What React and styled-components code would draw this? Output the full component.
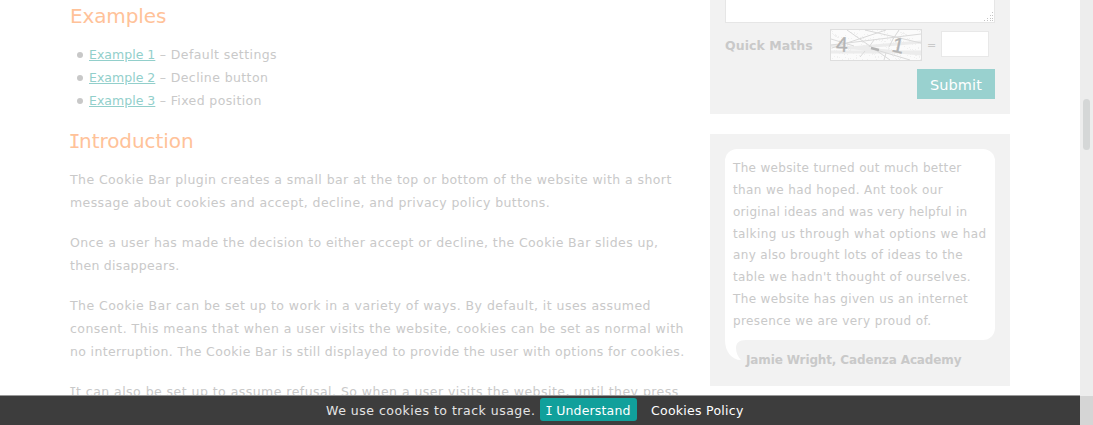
import React from "react";
import styled, { createGlobalStyle } from "styled-components";

const GlobalStyle = createGlobalStyle`
  * { box-sizing: border-box; }
  html, body { margin: 0; height: 425px; overflow: hidden; background: #fff; }
  body { font: 12.5px/23.4px Verdana, "DejaVu Sans", sans-serif; color: #c9c9c9; }
`;

const Viewport = styled.div`
  position: relative;
  display: flex;
  width: 1093px;
  height: 425px;
  overflow: hidden;
`;

const Page = styled.main`
  display: flex;
  align-items: flex-start;
  width: 1080px;
  height: 425px;
  padding-left: 70px;
  overflow: hidden;
`;

const Article = styled.article`
  width: 640px;
  flex: none;
`;

const Heading = styled.h2`
  margin: 0;
  height: 27px;
  padding-top: ${(p) => p.$top || 0}px;
  box-sizing: content-box;
  font-size: 20px;
  line-height: 27px;
  font-weight: 400;
  letter-spacing: ${(p) => p.$spacing ?? 0}px;
  color: #ffc299;
`;

const List = styled.ul`
  margin: 0;
  padding: 13px 0 0 19px;
  list-style: none;
`;

const Item = styled.li`
  display: flex;
  align-items: center;
  height: 23px;
  letter-spacing: ${(p) => p.$spacing ?? 0.5}px;
  white-space: pre;

  &::before {
    content: "";
    width: 6px;
    height: 6px;
    margin: 0 6px 0 -12px;
    border-radius: 50%;
    background: #c8c8c8;
  }
`;

const Link = styled.a`
  color: #92cfcb;
  letter-spacing: 0.02px;
  text-decoration: underline;
`;

const Body = styled.div`
  padding-top: 13px;
`;

const Paragraph = styled.p`
  margin: 0 0 16px;
`;

const Line = styled.span`
  display: block;
  white-space: nowrap;
  letter-spacing: ${(p) => p.$spacing ?? 0.5}px;
`;

const SlabI = styled.span`
  font-family: "DejaVu Sans Mono", monospace;
  margin: 0 ${(p) => p.$tuck ?? -1}px;
`;

const Sidebar = styled.aside`
  width: 300px;
  flex: none;
  display: flex;
  flex-direction: column;
  gap: 20px;
`;

const FormPanel = styled.section`
  height: 114px;
  padding: 0 15px;
  background: #f2f2f2;
`;

const MessageBox = styled.div`
  display: flex;
  justify-content: flex-end;
  align-items: flex-end;
  height: 23px;
  border: 1px solid #e6e6e6;
  border-top: 0;
  background: #fff;
`;

const MathsRow = styled.div`
  display: flex;
  align-items: center;
  height: 44px;
`;

const MathsLabel = styled.label`
  width: 105px;
  padding-top: 1px;
  font-weight: 700;
  font-size: 12.5px;
  letter-spacing: 0.05px;
  white-space: nowrap;
`;

const Equals = styled.span`
  width: 19px;
  padding: 1px 0 0 5px;
  font-size: 11px;
`;

const Answer = styled.div`
  width: 48px;
  height: 26px;
  margin-bottom: 2px;
  border: 1px solid #e8e8e8;
  background: #fff;
`;

const Submit = styled.button`
  display: block;
  width: 78px;
  height: 30px;
  margin: 2px 0 0 auto;
  padding: 2px 0 0;
  border: 0;
  background: #99d1cf;
  color: #fff;
  font: 14.5px/28px Verdana, "DejaVu Sans", sans-serif;
  letter-spacing: 0.1px;
`;

const QuotePanel = styled.section`
  height: 252px;
  padding: 15px 15px 0;
  background: #f2f2f2;
`;

const Quote = styled.blockquote`
  margin: 0;
  height: 191px;
  padding: 8.8px 8px 0;
  border-radius: 12px 12px 12px 0;
  background: #fff;
  font-size: 12px;
  line-height: 21.9px;
`;

const Credit = styled.div`
  display: flex;
  height: 30px;
`;

const Author = styled.strong`
  padding-top: 8px;
  font-size: 12px;
  line-height: 24px;
  letter-spacing: -0.13px;
  white-space: nowrap;
`;

const Scrollbar = styled.div`
  width: 13px;
  height: 425px;
  padding: 99px 3px 0;
  background: linear-gradient(#ededed 396px, #d5d5d5 396px);
`;

const Thumb = styled.div`
  width: 7px;
  height: 51px;
  border-radius: 4px;
  background: #d5d7d7;
`;

const CookieBar = styled.div`
  position: absolute;
  left: 0;
  bottom: 0;
  display: flex;
  align-items: center;
  width: 1080px;
  height: 30px;
  padding-left: 326px;
  border-top: 1px solid #999;
  background: #3d3d3d;
  color: #e4e4e4;
  white-space: nowrap;
`;

const CookieText = styled.span`
  width: 214px;
  letter-spacing: 0.5px;
`;

const Accept = styled.button`
  width: 97px;
  height: 23px;
  margin: 0 14px 2px 0;
  padding: 2px 0 0;
  border: 0;
  border-radius: 3px;
  background: #11a09b;
  color: #fff;
  font: 12.5px/21px Verdana, "DejaVu Sans", sans-serif;
  letter-spacing: 0.17px;
`;

const Policy = styled.a`
  color: #fff;
  letter-spacing: 0.27px;
`;

const examples = [
  ["Example 1", " – Default settings", 0.42],
  ["Example 2", " – Decline button", 0.4],
  ["Example 3", " – Fixed position", 0.38],
];

const paragraphs = [
  [
    ["The Cookie Bar plugin creates a small bar at the top or bottom of the website with a short", 0.42],
    ["message about cookies and accept, decline, and privacy policy buttons.", 0.41],
  ],
  [
    ["Once a user has made the decision to either accept or decline, the Cookie Bar slides up,", 0.4],
    ["then disappears.", 0.29],
  ],
  [
    ["The Cookie Bar can be set up to work in a variety of ways. By default, it uses assumed", 0.45],
    ["consent. This means that when a user visits the website, cookies can be set as normal with", 0.46],
    ["no interruption. The Cookie Bar is still displayed to provide the user with options for cookies.", 0.36],
  ],
];

const quote = [
  ["The website turned out much better", 0.33],
  ["than we had hoped. Ant took our", 0.39],
  ["original ideas and was very helpful in", 0.27],
  ["talking us through what options we had", 0.4],
  ["any also brought lots of ideas to the", 0.35],
  ["table we hadn't thought of ourselves.", 0.35],
  ["The website has given us an internet", 0.36],
  ["presence we are very proud of.", 0.4],
];

const speckles = Array.from({ length: 260 }, (_, i) => [
  1 + ((i * 37 + ((i * i) % 13)) % 90),
  1 + ((i * 17 + ((i * i) % 7)) % 30),
]);

function Captcha() {
  return (
    <svg width="92" height="32" viewBox="0 0 92 32">
      <rect x=".5" y=".5" width="91" height="31" fill="#fbfbfb" stroke="#dedede" />
      {speckles.map(([x, y], i) => (
        <rect key={i} x={x} y={y} width="1" height="1" fill="#f0f0f0" />
      ))}
      <g fill="none" stroke="#ececec" strokeWidth="3">
        <path d="M1 23H91M1 17L91 25M20 19L91 13" />
      </g>
      <g fill="none" stroke="#dadada" strokeWidth="1">
        <path d="M17 1L60 31M35 1L91 14M1 16L91 5M1 10L24 17M2 19L56 1M44 11L39 18M64 8L59 18M69 1L63 10M30 28L35 22M56 24L54 31M43 20L80 31" />
      </g>
      <g fill="#b4b4b4" stroke="#b4b4b4" strokeWidth=".3" fontFamily="Liberation Sans, sans-serif">
        <text x="6" y="22.5" fontSize="21" transform="rotate(3 10 16)">4</text>
        <text x="62" y="23.5" fontSize="21" transform="rotate(12 68 18)">1</text>
      </g>
      <path d="M41 19L49 21" stroke="#b4b4b4" strokeWidth="2.4" />
    </svg>
  );
}

function Grip() {
  const dots = [[8, 0], [6, 3], [8, 3], [3, 6], [6, 6], [8, 6], [0, 8], [3, 8], [6, 8], [8, 8]];
  return (
    <svg width="10" height="11" viewBox="0 0 10 11">
      {dots.map(([x, y]) => (
        <rect key={`${x}-${y}`} x={x} y={y + 1} width="1" height="1" fill="#c4c4c4" />
      ))}
    </svg>
  );
}

export default function App() {
  return (
    <Viewport>
      <GlobalStyle />
      <Page>
        <Article>
          <Heading $top={3} $spacing={-0.12}>Examples</Heading>
          <List>
            {examples.map(([name, text, s]) => (
              <Item key={name} $spacing={s}>
                <Link>{name}</Link>
                {text}
              </Item>
            ))}
          </List>
          <Heading $top={16} $spacing={-0.05}><SlabI $tuck={-1.5}>I</SlabI>ntroduction</Heading>
          <Body>
            {paragraphs.map((lines, i) => (
              <Paragraph key={i}>
                {lines.map(([t, s]) => <Line key={t} $spacing={s}>{t}</Line>)}
              </Paragraph>
            ))}
            <Paragraph>
              <Line $spacing={0.46}><SlabI>I</SlabI>t can also be set up to assume refusal. So when a user visits the website, until they press</Line>
            </Paragraph>
          </Body>
        </Article>
        <Sidebar>
          <FormPanel>
            <MessageBox><Grip /></MessageBox>
            <MathsRow>
              <MathsLabel>Quick Maths</MathsLabel>
              <Captcha />
              <Equals>=</Equals>
              <Answer />
            </MathsRow>
            <Submit>Submit</Submit>
          </FormPanel>
          <QuotePanel>
            <Quote>
              {quote.map(([t, s]) => <Line key={t} $spacing={s}>{t}</Line>)}
            </Quote>
            <Credit>
              <svg width="21" height="21" viewBox="0 0 21 21">
                <path d="M0 0H21C14 0 11 3 11 8C11 13 13 17 16 20C7 20 0 12 0 0Z" fill="#fff" />
              </svg>
              <Author>Jamie Wright, Cadenza Academy</Author>
            </Credit>
          </QuotePanel>
        </Sidebar>
      </Page>
      <Scrollbar><Thumb /></Scrollbar>
      <CookieBar>
        <CookieText>We use cookies to track usage.</CookieText>
        <Accept><SlabI>I</SlabI> Understand</Accept>
        <Policy>Cookies Policy</Policy>
      </CookieBar>
    </Viewport>
  );
}
